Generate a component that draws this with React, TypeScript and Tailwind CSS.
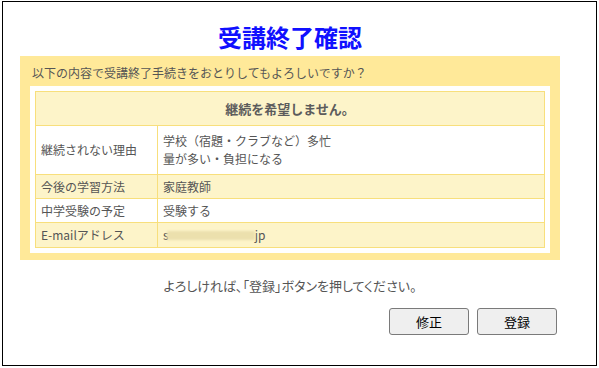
const rows = [
  { label: "今後の学習方法", value: "家庭教師", alt: true },
  { label: "中学受験の予定", value: "受験する", alt: false },
];

const cellBorder = "border border-[#f8df7c]";

const App = () => {
  return (
    <div className="font-['Noto_Sans_CJK_JP',sans-serif] text-[#555555]">
      <div className="ml-[2px] mt-[1px] h-[365px] w-[595px] border border-black bg-white">
        <div className="ml-[17px] w-[540px]">
          <h1 className="mt-[23px] text-center text-[24px] font-bold leading-[24px] text-[#1010ff]">
            受講終了確認
          </h1>

          <div className="mt-[7px] bg-[#ffe999] px-[10px] pb-[7px] pt-[8px]">
            <p className="pl-[2px] text-[12px] leading-[18px]">
              以下の内容で受講終了手続きをおとりしてもよろしいですか？
            </p>
            <div className="mt-[4px] bg-white p-[5px]">
              <table className="w-full border-collapse text-[12px]">
                <tbody>
                  <tr className="bg-[#fdf4c9]">
                    <th
                      colSpan={2}
                      className={`${cellBorder} h-[34px] text-center text-[13px] font-bold text-[#5c5c5c]`}
                    >
                      継続を希望しません。
                    </th>
                  </tr>
                  <tr className="bg-white">
                    <td className={`${cellBorder} w-[122px] px-[5px] py-[6px] leading-[18px]`}>
                      継続されない理由
                    </td>
                    <td className={`${cellBorder} px-[5px] py-[6px] leading-[18px]`}>
                      学校（宿題・クラブなど）多忙
                      <br />
                      量が多い・負担になる
                    </td>
                  </tr>
                  {rows.map((row) => (
                    <tr key={row.label} className={row.alt ? "bg-[#fdf4c9]" : "bg-white"}>
                      <td className={`${cellBorder} px-[5px] py-[2px] leading-[19px]`}>{row.label}</td>
                      <td className={`${cellBorder} px-[5px] py-[2px] leading-[19px]`}>{row.value}</td>
                    </tr>
                  ))}
                  <tr className="bg-[#fdf4c9]">
                    <td className={`${cellBorder} px-[5px] py-[2px] leading-[20px]`}>E-mailアドレス</td>
                    <td className={`${cellBorder} px-[5px] py-[2px] leading-[20px]`}>
                      <span className="inline-flex items-center">
                        <span>s</span>
                        <span className="-ml-[2px] inline-block h-[9px] w-[88px] bg-[#ece0ad] blur-[1px]" />
                        <span>jp</span>
                      </span>
                    </td>
                  </tr>
                </tbody>
              </table>
            </div>
          </div>

          <p className="mt-[16px] text-center text-[13px] leading-[20px] [font-feature-settings:'palt']">
            よろしければ、「登録」ボタンを押してください。
          </p>

          <div className="mt-[12px] flex justify-end gap-2 pr-[3px]">
            <button className="h-[27px] w-[80px] rounded-[3px] border border-[#7a7a7a] bg-[#efefef] text-[13px] text-black">
              修正
            </button>
            <button className="h-[27px] w-[80px] rounded-[3px] border border-[#7a7a7a] bg-[#efefef] text-[13px] text-black">
              登録
            </button>
          </div>
        </div>
      </div>
    </div>
  );
};

export default App;
